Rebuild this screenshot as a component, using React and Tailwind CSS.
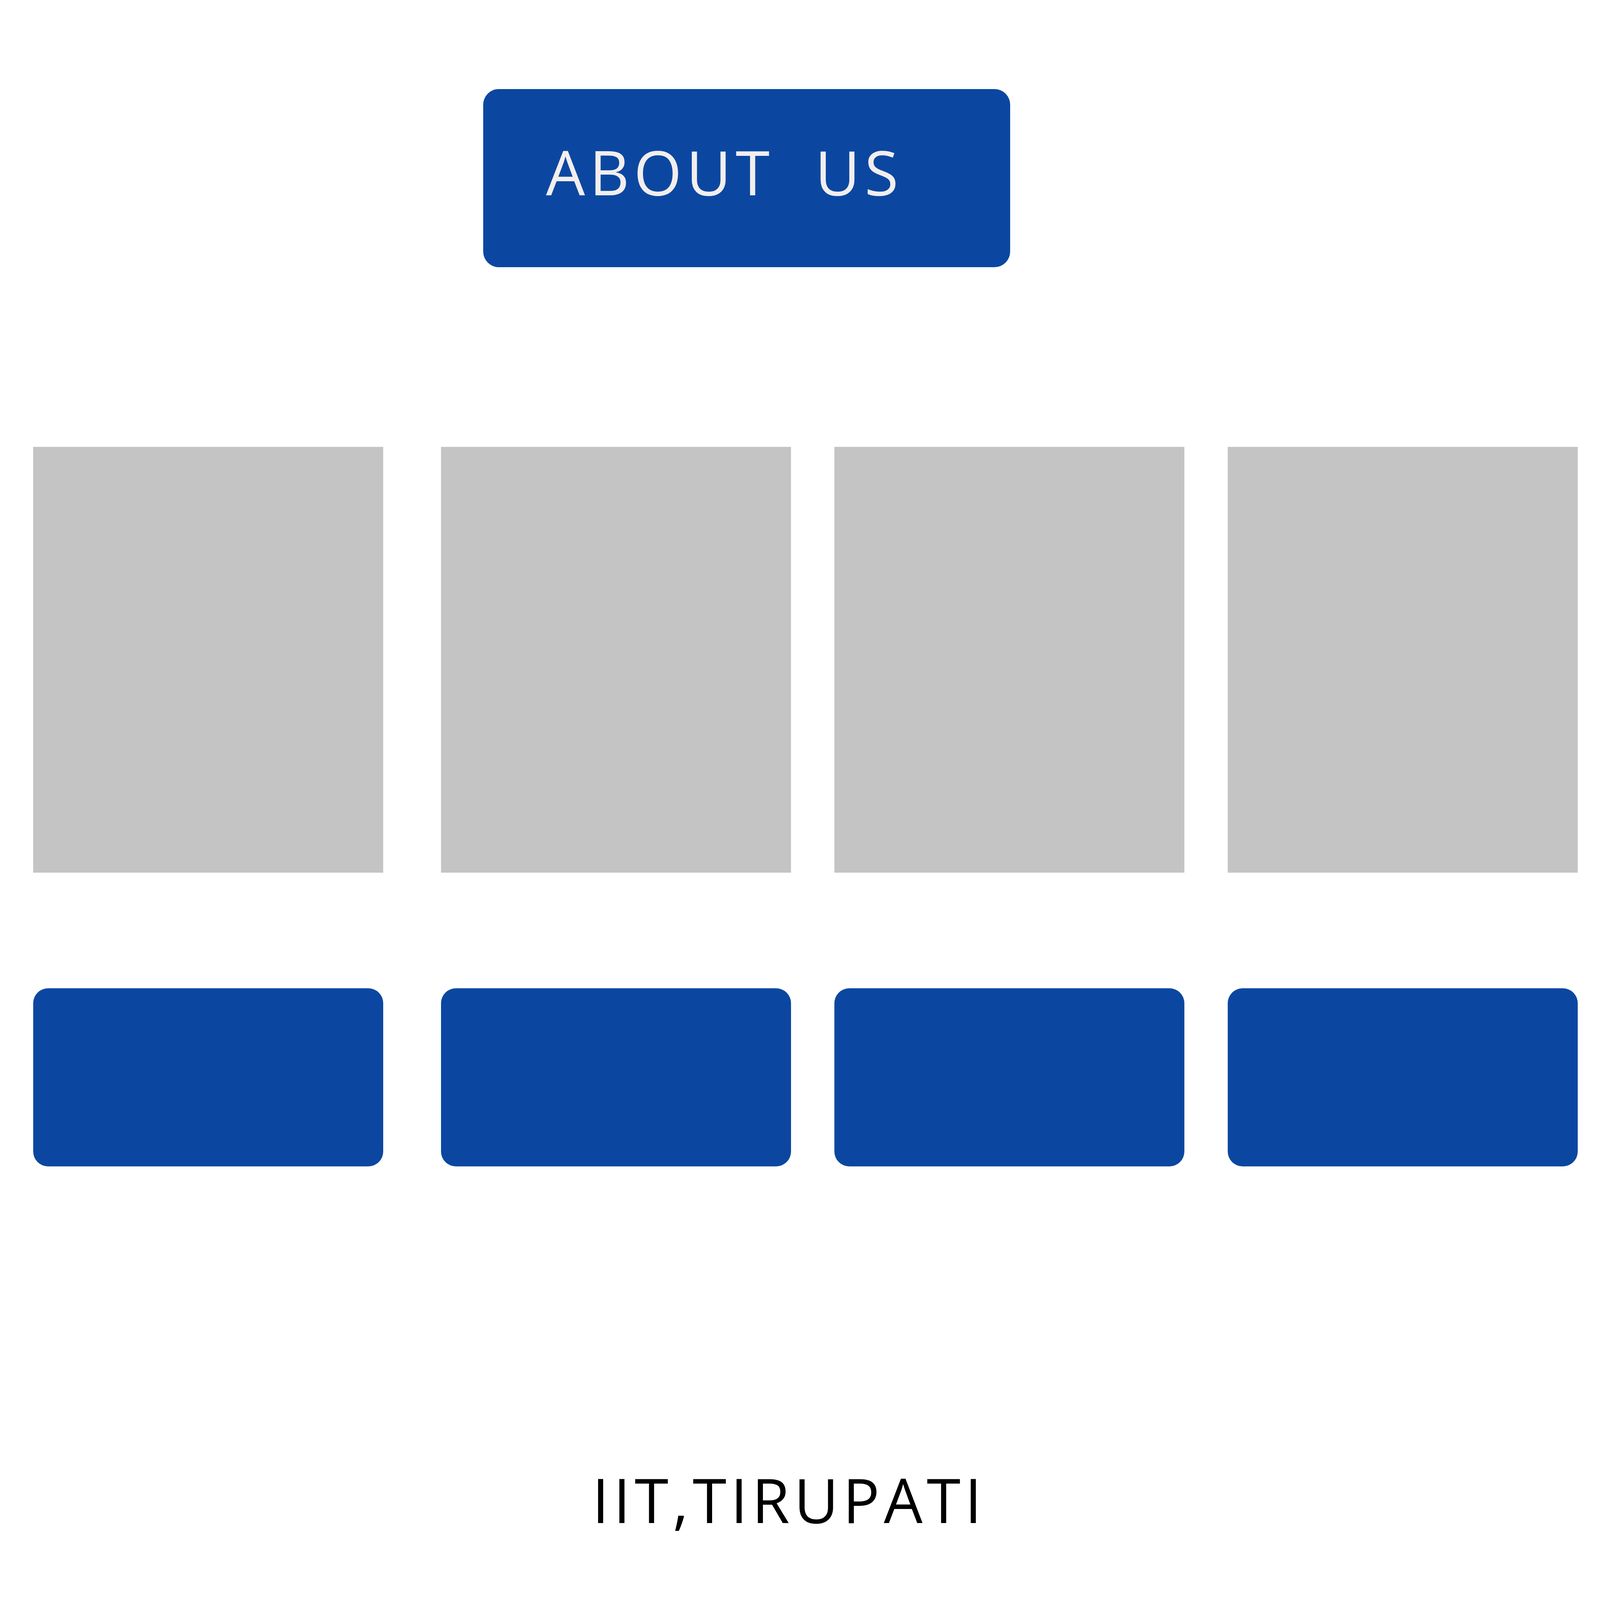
import React from "react"

// columns: left margin as share of the page width (5760 design)
const columns = [
  { id: 1, space: "ml-[2.083%]" },
  { id: 2, space: "ml-[3.611%]" },
  { id: 3, space: "ml-[2.708%]" },
  { id: 4, space: "ml-[2.708%]" },
]

const App = () => {
  return (
    <div
      className="w-full h-[4096px] bg-white flex flex-col overflow-hidden"
      style={{ fontFamily: '"Open Sans", "Liberation Sans", sans-serif' }}
    >
      {/* About us header button */}
      <div className="pt-[228px]">
        <div className="ml-[30.208%] w-[32.917%] h-[456px] rounded-[40px] bg-[#0b47a1] flex justify-center pr-[114px] pt-[132px]">
          <span className="block h-fit whitespace-pre text-[158px] leading-none tracking-[0.278vw] text-[#f2eeee]">
            ABOUT  US
          </span>
        </div>
      </div>

      {/* Image placeholders with buttons under them */}
      <div className="flex mt-[460px]">
        {columns.map((col) => (
          <div key={col.id} className={`flex flex-col w-[21.875%] shrink-0 ${col.space}`}>
            <div className="h-[1090px] bg-[#c4c4c4]" />
            <div className="mt-[296px] h-[456px] rounded-[38px] bg-[#0b47a1]" />
          </div>
        ))}
      </div>

      {/* Footer */}
      <div className="mt-[774px] flex justify-center pr-[56px]">
        <span className="block whitespace-nowrap text-[157px] leading-none tracking-[0.26vw] text-black">
          IIT,TIRUPATI
        </span>
      </div>
    </div>
  )
}

export default App
